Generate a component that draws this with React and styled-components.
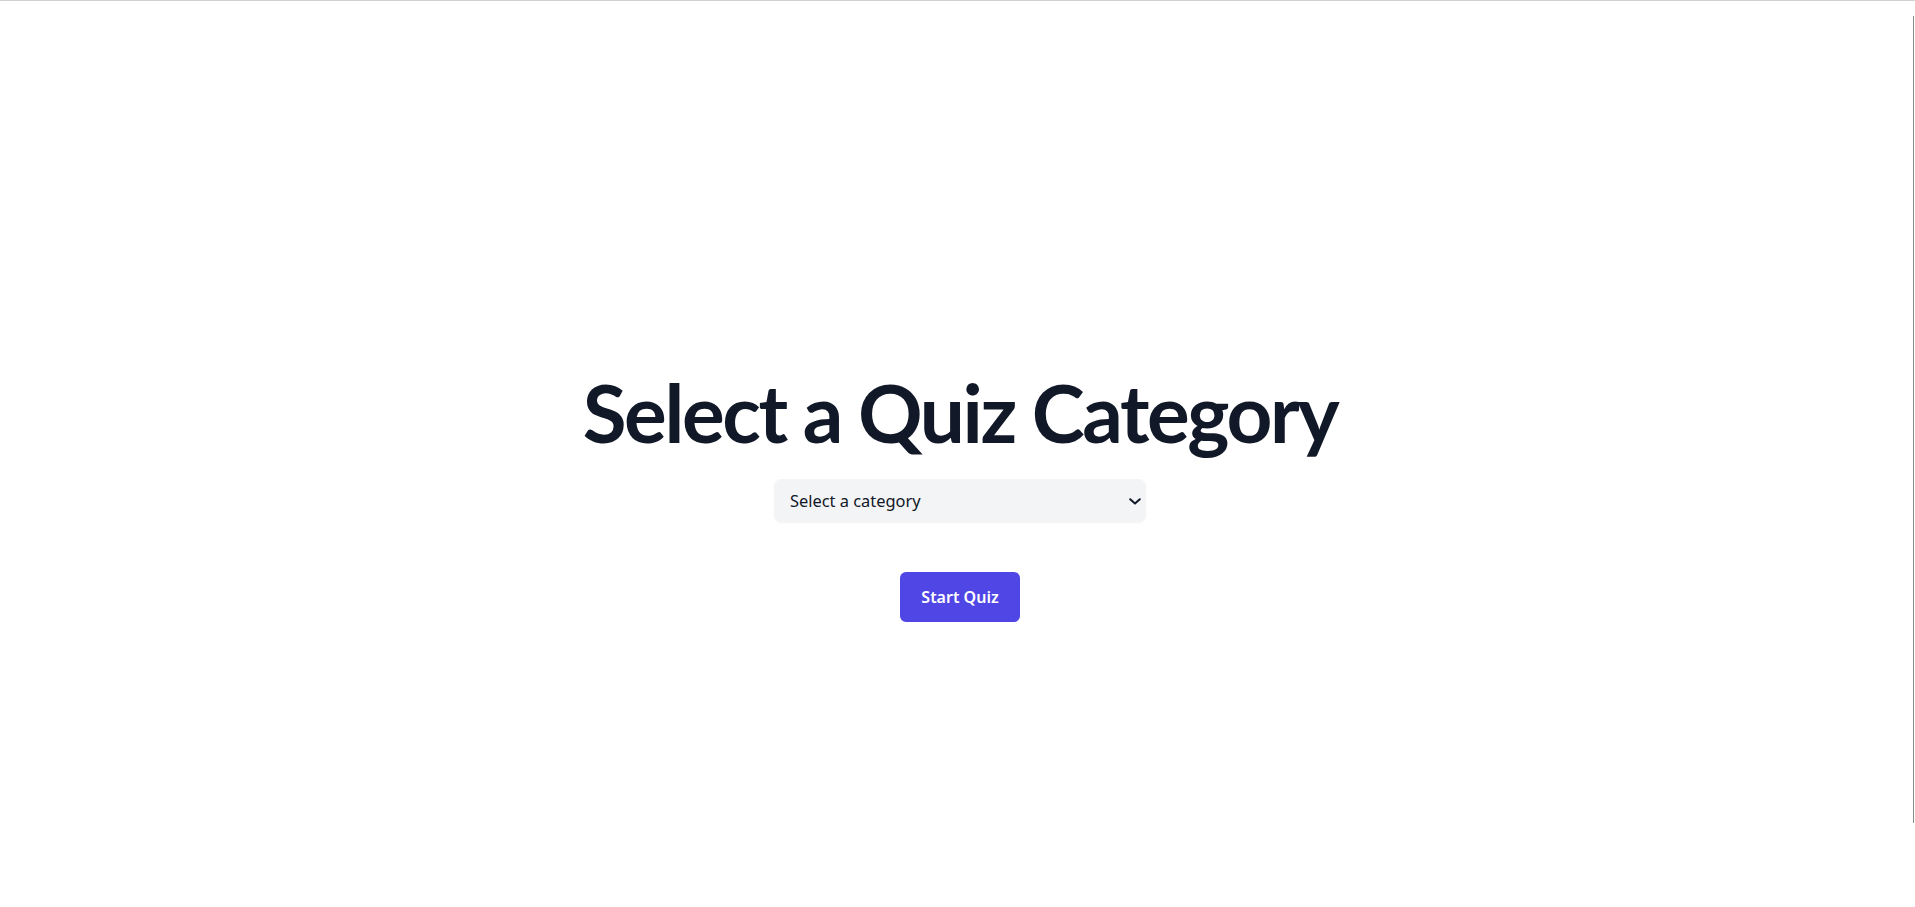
import styled, { createGlobalStyle } from "styled-components";

const GlobalStyle = createGlobalStyle`
  * { box-sizing: border-box; }
  html, body { overflow: hidden; }
  body {
    margin: 0;
    background: #ffffff;
    font-family: "Noto Sans", "Open Sans", sans-serif;
  }
`;

const Page = styled.main`
  min-height: 100vh;
  padding: 85px 0 0 5px;
  border-top: 1px solid #d1d1d1;
  display: flex;
  flex-direction: column;
  align-items: center;
  justify-content: center;
`;

const Title = styled.h1`
  margin: 0 0 27px;
  font-family: Lato, "Noto Sans", sans-serif;
  font-weight: 700;
  font-size: 80px;
  line-height: 1;
  letter-spacing: -2.4px;
  color: #111827;
`;

const SelectWrap = styled.div`
  position: relative;
  width: 372px;
`;

const Select = styled.select`
  appearance: none;
  width: 100%;
  height: 43px;
  padding: 0 36px 0 16px;
  border: none;
  border-radius: 8px;
  background: #f3f4f6;
  box-shadow: 0 1px 2px rgba(0, 0, 0, 0.05);
  font-family: "Noto Sans", sans-serif;
  font-size: 16.4px;
  color: #111827;
  outline: none;
  cursor: pointer;
`;

const Chevron = styled.svg`
  position: absolute;
  right: 5px;
  top: 19px;
  pointer-events: none;
`;

const StartButton = styled.button`
  margin-top: 50px;
  height: 50px;
  padding: 0 21px;
  border: none;
  border-radius: 6px;
  background: #4f46e5;
  color: #ffffff;
  font-family: "Noto Sans", sans-serif;
  font-size: 16px;
  font-weight: 600;
  cursor: pointer;
`;

const EdgeLine = styled.div`
  position: fixed;
  top: 16px;
  right: 1px;
  width: 1px;
  height: 807px;
  background: #8a8a8a;
`;

const categories = [
  "General Knowledge",
  "Science",
  "History",
  "Geography",
  "Sports",
  "Entertainment",
];

export default function App() {
  return (
    <>
      <GlobalStyle />
      <Page>
        <Title>Select a Quiz Category</Title>
        <SelectWrap>
          <Select defaultValue="">
            <option value="" disabled>
              Select a category
            </option>
            {categories.map((c) => (
              <option key={c} value={c}>
                {c}
              </option>
            ))}
          </Select>
          <Chevron width="12" height="7" viewBox="0 0 12 7" fill="none">
            <path d="M1.2 1.2 L6 5.6 L10.8 1.2" stroke="#111827" strokeWidth="2" strokeLinecap="round" strokeLinejoin="round" />
          </Chevron>
        </SelectWrap>
        <StartButton>Start Quiz</StartButton>
      </Page>
      <EdgeLine />
    </>
  );
}
